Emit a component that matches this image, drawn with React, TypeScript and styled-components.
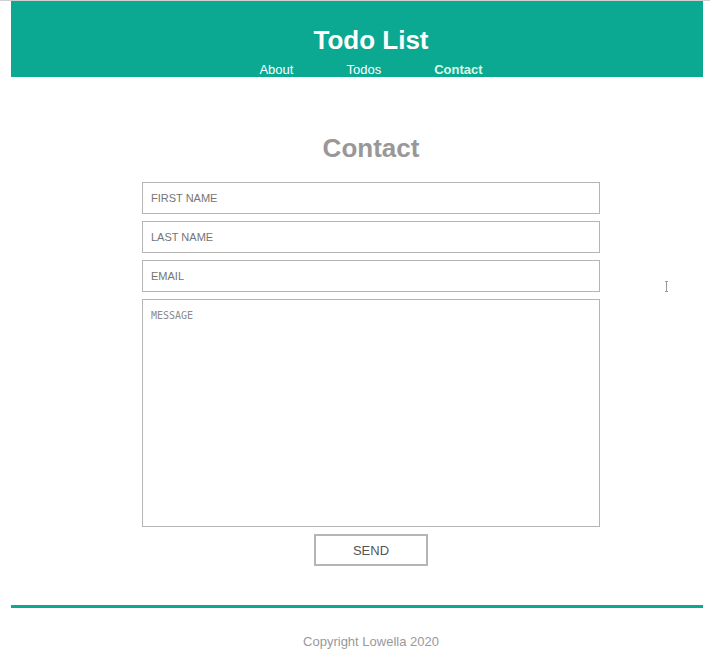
import React from 'react'
import styled, { createGlobalStyle } from 'styled-components'

const GlobalStyle = createGlobalStyle`
  html, body {
    margin: 0;
    padding: 0;
    background: #ffffff;
  }
  body {
    border-top: 1px solid #d0d0d0;
    font-family: "Liberation Sans", Arial, sans-serif;
  }
`

const Page = styled.div`
  position: relative;
  display: flex;
  flex-direction: column;
  margin: 0 7px 0 11px;
  min-height: 670px;
`

const Header = styled.header`
  display: flex;
  flex-direction: column;
  align-items: center;
  height: 76px;
  box-sizing: border-box;
  padding: 24px 0 0 28px;
  background: #0ba892;
`

const Title = styled.h1`
  margin: 0;
  font-size: 26px;
  line-height: 30px;
  font-weight: bold;
  color: #ffffff;
`

const Nav = styled.nav`
  display: flex;
  gap: 53px;
  margin-top: 7px;
`

const NavLink = styled.a<{ $active?: boolean }>`
  font-size: 13px;
  line-height: 15px;
  text-decoration: none;
  color: ${p => (p.$active ? '#d8fbe8' : '#ffffff')};
  font-weight: ${p => (p.$active ? 'bold' : 'normal')};
  cursor: pointer;
`

const Main = styled.main`
  display: flex;
  flex-direction: column;
  align-items: center;
  padding: 56px 0 0 28px;
`

const Heading = styled.h2`
  margin: 0 0 19px;
  font-size: 26px;
  line-height: 30px;
  font-weight: bold;
  color: #999797;
`

const Form = styled.form`
  display: flex;
  flex-direction: column;
  align-items: center;
  gap: 7px;
  width: 458px;
`

const Field = styled.input`
  width: 100%;
  height: 32px;
  box-sizing: border-box;
  margin: 0;
  padding: 0 8px;
  border: 1px solid #b8b3b5;
  border-radius: 0;
  font-family: "Liberation Sans", Arial, sans-serif;
  font-size: 11px;
  color: #555;
  outline: none;

  &::placeholder {
    color: #757575;
  }
`

const Message = styled.textarea`
  width: 100%;
  height: 228px;
  box-sizing: border-box;
  margin: 0;
  padding: 10px 8px;
  border: 1px solid #b8b3b5;
  border-radius: 0;
  font-family: "DejaVu Sans Mono", "Liberation Mono", monospace;
  font-size: 10px;
  resize: none;
  outline: none;

  &::placeholder {
    color: #8a8a8a;
  }
`

const SendButton = styled.button`
  width: 114px;
  height: 32px;
  box-sizing: border-box;
  border: 2px solid #b8b3b5;
  background: #ffffff;
  font-family: "Liberation Sans", Arial, sans-serif;
  font-size: 13px;
  color: #555;
  cursor: pointer;
`

const Footer = styled.footer`
  display: flex;
  justify-content: center;
  margin-top: 39px;
  padding: 26px 0 0 28px;
  border-top: 3px solid #0ba892;
  height: 40px;
`

const Copyright = styled.p`
  margin: 0;
  font-size: 13px;
  line-height: 15px;
  color: #999;
`

const Cursor = styled.svg`
  position: absolute;
  left: 654px;
  top: 280px;
`

export default function App() {
  return (
    <>
      <GlobalStyle />
      <Page>
        <Header>
          <Title>Todo List</Title>
          <Nav>
            <NavLink>About</NavLink>
            <NavLink>Todos</NavLink>
            <NavLink $active>Contact</NavLink>
          </Nav>
        </Header>

        <Main>
          <Heading>Contact</Heading>
          <Form onSubmit={e => e.preventDefault()}>
            <Field type="text" placeholder="FIRST NAME" />
            <Field type="text" placeholder="LAST NAME" />
            <Field type="email" placeholder="EMAIL" />
            <Message placeholder="MESSAGE" />
            <SendButton type="submit">SEND</SendButton>
          </Form>
        </Main>

        <Footer>
          <Copyright>Copyright Lowella 2020</Copyright>
        </Footer>

        <Cursor width="3" height="11" viewBox="0 0 3 11">
          <path d="M0 0.5h3M1.5 0.5v10M0 10.5h3" stroke="#999" strokeWidth="1" fill="none" />
        </Cursor>
      </Page>
    </>
  )
}
